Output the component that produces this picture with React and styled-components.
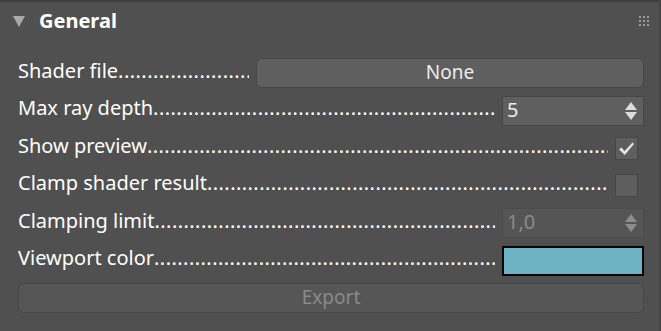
import React from 'react'
import styled, { createGlobalStyle } from 'styled-components'

const Global = createGlobalStyle`
html, body {
  margin: 0;
  padding: 0;
  background: #505050;
}
body {
  font-family: "Noto Sans", "Open Sans", sans-serif;
}
`

const Panel = styled.div`
width: 661px;
height: 331px;
box-sizing: border-box;
background: #505050;
border-top: 2px solid #3e3e3e;
border-right: 2px solid #444444;
display: flex;
flex-direction: column;
`

const Header = styled.div`
height: 38px;
display: flex;
align-items: center;
padding: 0 10px 0 13px;
`

const Arrow = styled.span`
width: 0;
height: 0;
border-left: 6px solid transparent;
border-right: 6px solid transparent;
border-top: 11px solid #a9a9a9;
margin-right: 14px;
`

const Title = styled.span`
flex: 1;
font-size: 20px;
font-weight: 700;
color: #ffffff;
padding-bottom: 2px;
`

const Grip = styled.div`
display: grid;
grid-template-columns: repeat(3, 2px);
grid-auto-rows: 2px;
gap: 2px;
span {
  background: #9a9a9a;
}
`

const Body = styled.div`
display: flex;
flex-direction: column;
gap: 7.5px;
padding: 18px 15px 0 18px;
`

const Row = styled.div`
height: 30px;
display: flex;
align-items: center;
gap: 7px;
`

const Label = styled.div`
flex: 1;
min-width: 0;
display: flex;
font-size: 20px;
line-height: 26px;
padding-bottom: 5px;
color: #ffffff;
white-space: nowrap;
`

const Leader = styled.span`
flex: 1;
overflow: hidden;
letter-spacing: 0.45px;
&::after {
  content: '${'.'.repeat(150)}';
}
`

const WideButton = styled.button`
width: 388px;
height: 30px;
box-sizing: border-box;
background: #5f5f5f;
border: 1px solid #474747;
border-radius: 6px;
font-family: inherit;
font-size: 19px;
color: ${p => (p.disabled ? '#8a8a8a' : '#ececec')};
padding: 0 0 2px;
`

const ExportButton = styled(WideButton)`
width: 100%;
background: #565656;
`

const Spinner = styled.div`
width: 142px;
height: 30px;
box-sizing: border-box;
background: ${p => (p.disabled ? '#555555' : '#5f5f5f')};
border: 1px solid ${p => (p.disabled ? '#4b4b4b' : '#474747')};
display: flex;
align-items: center;
padding: 0 6px 0 4px;
font-size: 20px;
color: ${p => (p.disabled ? '#8a8a8a' : '#ececec')};
`

const SpinValue = styled.span`
flex: 1;
padding-bottom: 3px;
`

const Arrows = styled.div`
display: flex;
flex-direction: column;
gap: 2px;
`

const Tri = styled.span`
width: 0;
height: 0;
border-left: 6px solid transparent;
border-right: 6px solid transparent;
${p => (p.down ? 'border-top' : 'border-bottom')}: 8px solid ${p => (p.disabled ? '#8c8c8c' : '#dcdcdc')};
`

const Check = styled.div`
width: 23px;
height: 23px;
box-sizing: border-box;
background: #5e5e5e;
border: 1px solid #474747;
margin-right: 6px;
display: flex;
align-items: center;
justify-content: center;
`

const Swatch = styled.div`
width: 142px;
height: 30px;
box-sizing: border-box;
border: 2px solid #050505;
background: ${p => p.color};
`

const Field = ({ label, children }) => (
  <Row>
    <Label>
      {label}
      <Leader />
    </Label>
    {children}
  </Row>
)

const NumberBox = ({ value, disabled }) => (
  <Spinner disabled={disabled}>
    <SpinValue>{value}</SpinValue>
    <Arrows>
      <Tri disabled={disabled} />
      <Tri down disabled={disabled} />
    </Arrows>
  </Spinner>
)

const CheckMark = () => (
  <svg width="17" height="15" viewBox="0 0 17 15">
    <path d="M1 8.5 L3.5 6.5 L6.5 10 L14.5 1.5 L16 3 L6.8 14 Z" fill="#e2e2e2" />
  </svg>
)

const App = () => {
  return (
    <>
      <Global />
      <Panel>
        <Header>
          <Arrow />
          <Title>General</Title>
          <Grip>
            {Array.from({ length: 9 }).map((_, i) => <span key={i} />)}
          </Grip>
        </Header>
        <Body>
          <Field label="Shader file">
            <WideButton>None</WideButton>
          </Field>
          <Field label="Max ray depth">
            <NumberBox value="5" />
          </Field>
          <Field label="Show preview">
            <Check><CheckMark /></Check>
          </Field>
          <Field label="Clamp shader result">
            <Check />
          </Field>
          <Field label="Clamping limit">
            <NumberBox value="1,0" disabled />
          </Field>
          <Field label="Viewport color">
            <Swatch color="#6db3c3" />
          </Field>
          <Row>
            <ExportButton disabled>Export</ExportButton>
          </Row>
        </Body>
      </Panel>
    </>
  )
}

export default App
